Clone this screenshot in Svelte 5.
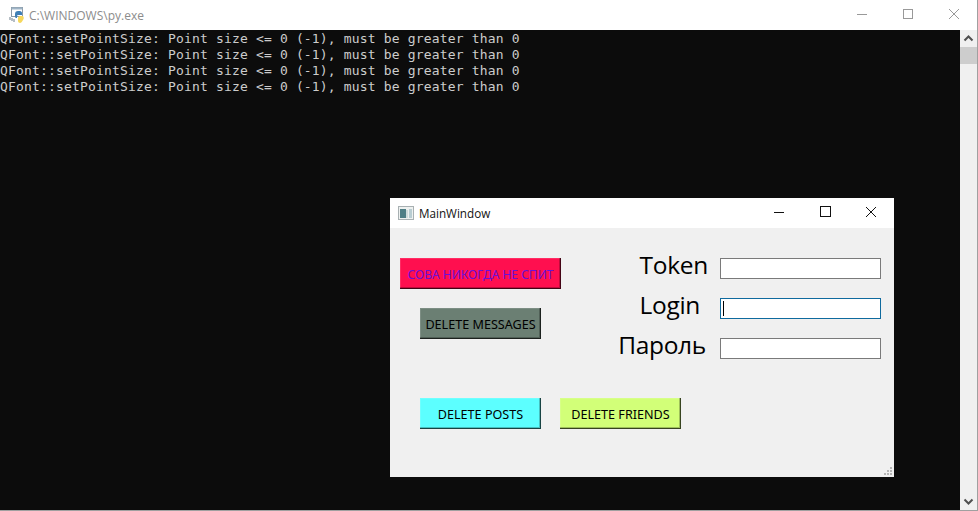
<script>
  const lines = Array(4).fill('QFont::setPointSize: Point size <= 0 (-1), must be greater than 0');
  // pad = gap to the input, lift = how far the label sits above the input's centre
  const fields = [
    { label: 'Token', pad: 12, lift: 4, focused: false },
    { label: 'Login', pad: 20, lift: 4, focused: true },
    { label: 'Пароль', pad: 14, lift: 4, focused: false }
  ];
</script>

<div class="console">
  <div class="titlebar">
    <svg class="py-icon" width="18" height="18" viewBox="0 0 18 18">
      <rect x="3.500" y="1.500" width="11" height="9" fill="#fff" stroke="#8a99a6"/>
      <path d="M3.500 1.500h11v2h-11z" fill="#9fb4c6"/>
      <path d="M2 11v3M4 12v3M6 13v3" stroke="#6f7f8c"/>
      <path d="M7 8c0-2 1-3 3-3h2c1 0 2 1 2 2v2h-4c-1 0-1 1-1 2v1H8c-1 0-1-2-1-4z" fill="#3f7fb5"/>
      <path d="M10 12c0-1 1-2 2-2h3c1 1 1 3 0 4-1 2-2 3-3 3s-2-1-2-2z" fill="#f6d75c"/>
    </svg>
    <span class="title">C:\WINDOWS\py.exe</span>
    <div class="controls">
      <svg width="46" height="30" viewBox="0 0 46 30"><path d="M18 14.500h10" stroke="#999" fill="none"/></svg>
      <svg width="46" height="30" viewBox="0 0 46 30"><rect x="18.500" y="9.500" width="9" height="9" stroke="#999" fill="none"/></svg>
      <svg width="46" height="30" viewBox="0 0 46 30"><path d="M18 9l10 10M28 9L18 19" stroke="#999" fill="none"/></svg>
    </div>
  </div>
  <div class="term">
    <pre class="output">{lines.join('\n')}</pre>
    <div class="scrollbar">
      <svg width="17" height="17" viewBox="0 0 17 17"><path d="M4.500 10.500l4-4 4 4" stroke="#505050" stroke-width="2" fill="none"/></svg>
      <div class="thumb"></div>
      <div class="track"></div>
      <svg width="17" height="17" viewBox="0 0 17 17"><path d="M4.500 6.500l4 4 4-4" stroke="#505050" stroke-width="2" fill="none"/></svg>
    </div>
  </div>
</div>

<div class="qt-window">
  <div class="qt-title">
    <svg width="16" height="14" viewBox="0 0 16 14">
      <rect x="0.500" y="0.500" width="15" height="13" fill="#eef1f0" stroke="#a8b0b2"/>
      <rect x="2" y="3" width="6" height="9" fill="#4f7f86"/>
      <rect x="8" y="4" width="2" height="8" fill="#cfdcdc"/>
      <rect x="11" y="3" width="3" height="9" fill="#b9cdd2"/>
    </svg>
    <span>MainWindow</span>
    <div class="controls">
      <svg width="46" height="30" viewBox="0 0 46 30"><path d="M18 14.500h10" stroke="#111" fill="none"/></svg>
      <svg width="46" height="30" viewBox="0 0 46 30"><rect x="18.500" y="8.500" width="10" height="10" stroke="#111" fill="none"/></svg>
      <svg width="46" height="30" viewBox="0 0 46 30"><path d="M18 9l10 10M28 9L18 19" stroke="#111" fill="none"/></svg>
    </div>
  </div>
  <div class="qt-body">
    <div class="top">
      <div class="left">
        <button class="btn owl">СОВА НИКОГДА НЕ СПИТ</button>
        <button class="btn msgs">DELETE MESSAGES</button>
      </div>
      <div class="form">
        {#each fields as f}
          <div class="row">
            <label style="padding-right: {f.pad}px; margin-bottom: {f.lift * 2}px">{f.label}</label>
            <div class="input" class:focused={f.focused}>
              {#if f.focused}<i class="caret"></i>{/if}
            </div>
          </div>
        {/each}
      </div>
    </div>
    <div class="bottom">
      <button class="btn posts">DELETE POSTS</button>
      <button class="btn friends">DELETE FRIENDS</button>
    </div>
    <svg class="grip" width="10" height="10" viewBox="0 0 10 10" fill="#b5b5b5">
      <rect x="7" y="1" width="2" height="2"/>
      <rect x="4" y="4" width="2" height="2"/><rect x="7" y="4" width="2" height="2"/>
      <rect x="1" y="7" width="2" height="2"/><rect x="4" y="7" width="2" height="2"/><rect x="7" y="7" width="2" height="2"/>
    </svg>
  </div>
</div>

<style>
  :global(body) {
    background: #fff;
    overflow: hidden;
  }

  .console {
    width: 977px;
    height: 510px;
    display: flex;
    flex-direction: column;
    border-right: 1px solid #a0a0a0;
    border-bottom: 1px solid #a0a0a0;
  }
  .titlebar {
    height: 30px;
    display: flex;
    align-items: center;
    background: #fff;
    flex: none;
  }
  .py-icon {
    margin-left: 8px;
    margin-right: 3px;
  }
  .title {
    font: 12px "Open Sans", sans-serif;
    color: #8c8c8c;
  }
  .controls {
    margin-left: auto;
    display: flex;
    height: 30px;
  }
  .term {
    flex: 1;
    display: flex;
    background: #0c0c0c;
    min-height: 0;
  }
  .output {
    flex: 1;
    margin: 0;
    padding-top: 1px;
    font: 13px/16px "DejaVu Sans Mono", monospace;
    letter-spacing: 0.17px;
    color: #cccccc;
  }
  .scrollbar {
    width: 17px;
    background: #f0f0f0;
    display: flex;
    flex-direction: column;
  }
  .scrollbar svg {
    flex: none;
  }
  .thumb {
    height: 17px;
    background: #cdcdcd;
    flex: none;
  }
  .track {
    flex: 1;
  }

  .qt-window {
    position: absolute;
    left: 390px;
    top: 198px;
    width: 504px;
    height: 279px;
    display: flex;
    flex-direction: column;
    background: #f0f0f0;
  }
  .qt-title {
    height: 30px;
    flex: none;
    background: #fff;
    display: flex;
    align-items: center;
    padding-left: 8px;
    gap: 5px;
    font: 11.7px "Open Sans", sans-serif;
    color: #111;
  }
  .qt-body {
    flex: 1;
    position: relative;
    padding: 30px 13px 0 10px;
  }
  .top {
    display: flex;
    justify-content: space-between;
    height: 140px;
  }
  .left {
    display: flex;
    flex-direction: column;
    align-items: flex-start;
    gap: 19px;
  }
  .btn {
    display: block;
    height: 31px;
    padding: 1px 0 0;
    border: none;
    font: 12.6px "Noto Sans", sans-serif;
    color: #000;
    box-shadow:
      inset -1px -1px 0 rgba(0, 0, 0, 0.65),
      inset -2px -2px 0 rgba(0, 0, 0, 0.25),
      inset 1px 1px 0 rgba(255, 255, 255, 0.12);
  }
  .owl {
    width: 161px;
    background: #ff0f4f;
    color: #6a10d8;
    font-size: 12px;
  }
  .msgs {
    width: 121px;
    margin-left: 20px;
    background: #6b7f73;
  }
  .form {
    display: flex;
    flex-direction: column;
    gap: 19px;
  }
  .row {
    display: flex;
    align-items: center;
    height: 21px;
  }
  label {
    width: 110px;
    box-sizing: border-box;
    text-align: right;
    font: 24.5px "Open Sans", sans-serif;
    letter-spacing: -0.3px;
    color: #000;
  }
  .input {
    width: 161px;
    height: 21px;
    box-sizing: border-box;
    border: 1px solid #7a7a7a;
    background: #fff;
    display: flex;
    align-items: center;
    padding-left: 2px;
  }
  .input.focused {
    border-color: #0f6a9e;
  }
  .caret {
    width: 1px;
    height: 15px;
    background: #000;
  }
  .bottom {
    display: flex;
    gap: 19px;
    padding-left: 20px;
  }
  .posts {
    width: 121px;
    background: #5cffff;
  }
  .friends {
    width: 121px;
    background: #d2ff78;
  }
  .grip {
    position: absolute;
    right: 1px;
    bottom: 1px;
  }
</style>
